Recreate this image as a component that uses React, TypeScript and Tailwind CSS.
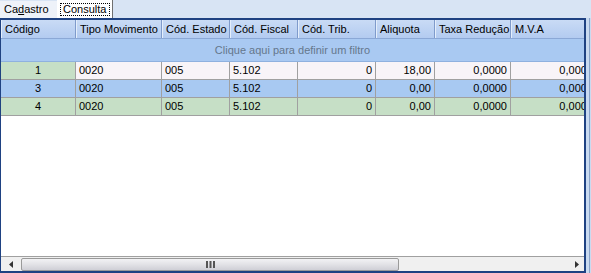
import React from 'react';

const cols = [
  { title: 'Código', w: 'w-[75px]', align: 'text-center' },
  { title: 'Tipo Movimento', w: 'w-[86px]', align: 'text-left' },
  { title: 'Cód. Estado', w: 'w-[68px]', align: 'text-left' },
  { title: 'Cód. Fiscal', w: 'w-[68px]', align: 'text-left' },
  { title: 'Cód. Trib.', w: 'w-[78px]', align: 'text-right' },
  { title: 'Aliquota', w: 'w-[59px]', align: 'text-right' },
  { title: 'Taxa Redução', w: 'w-[76px]', align: 'text-right' },
  { title: 'M.V.A', w: 'w-[86px]', align: 'text-right' },
];

const rows = [
  { bg: 'bg-[#f8f4f8]', first: 'bg-[#c6dfc6]', cells: ['1', '0020', '005', '5.102', '0', '18,00', '0,0000', '0,0000'] },
  { bg: 'bg-[#a8c9f2]', first: 'bg-[#a8c9f2]', cells: ['3', '0020', '005', '5.102', '0', '0,00', '0,0000', '0,0000'] },
  { bg: 'bg-[#c6dfc6]', first: 'bg-[#c6dfc6]', cells: ['4', '0020', '005', '5.102', '0', '0,00', '0,0000', '0,0000'] },
];

export default function App() {
  return (
    <div className="w-[591px] h-[273px] overflow-hidden bg-[#d8e4f4] flex flex-col font-['Liberation_Sans',Tahoma,sans-serif] text-[11px] text-black leading-none">
      {/* tabs */}
      <div className="h-[18px] flex items-end shrink-0">
        <div className="h-[17px] w-[57px] bg-[#eef2f9] flex items-center pl-[4px]">
          <span>Ca<span className="underline">d</span>astro</span>
        </div>
        <div className="h-[18px] w-[56px] bg-white border-l border-white border-r border-r-[#6f6f6f] flex items-center px-[2px]">
          <div className="h-[13px] w-full border border-dotted border-black flex items-center pl-[2px]">Consulta</div>
        </div>
      </div>

      <div className="flex flex-1 min-h-0">
        {/* grid */}
        <div className="w-[586px] h-full bg-white border-l border-t-2 border-r-2 border-b-2 border-[#1f4282] flex flex-col overflow-hidden">
          <div className="flex h-[19px] shrink-0 bg-gradient-to-b from-[#c9dbf5] to-[#b3cbf0] border-b border-[#8ba8d6] text-black">
            {cols.map((c, i) => (
              <div
                key={i}
                className={`${c.w} shrink-0 h-full flex items-center pl-[4px] border-r border-[#7f9bcb] shadow-[inset_1px_0_0_#e4eefb]`}
              >
                {c.title}
              </div>
            ))}
          </div>

          <div className="h-[23px] shrink-0 bg-[#a9c9f2] border-b border-[#8fb1df] flex items-center justify-center text-[#65778c]">
            Clique aqui para definir um filtro
          </div>

          {rows.map((r, ri) => (
            <div key={ri} className={`flex h-[18px] shrink-0 border-b border-[#a0a0a0] ${r.bg}`}>
              {r.cells.map((v, ci) => (
                <div
                  key={ci}
                  className={`${cols[ci].w} shrink-0 h-full flex items-center px-[3px] border-r border-[#a0a0a0] ${ci === 0 ? r.first : ''} ${
                    cols[ci].align === 'text-center' ? 'justify-center' : cols[ci].align === 'text-right' ? 'justify-end' : 'justify-start'
                  }`}
                >
                  {v}
                </div>
              ))}
            </div>
          ))}

          <div className="flex-1 bg-white" />

          {/* horizontal scrollbar */}
          <div className="h-[15px] shrink-0 bg-[#f0f0f0] border-t border-[#a0a0a0] flex items-center">
            <div className="w-[20px] h-full flex items-center justify-center">
              <svg width="4" height="7" viewBox="0 0 4 7">
                <path d="M4 0 L0 3.5 L4 7 Z" fill="#333" />
              </svg>
            </div>
            <div className="w-[378px] h-[13px] rounded-[2px] border border-[#9a9a9a] bg-gradient-to-b from-[#f2f2f4] via-[#e2e2e6] to-[#cfcfd6] flex items-center justify-center">
              <svg width="9" height="7" viewBox="0 0 9 7">
                <rect x="0" y="0" width="2" height="7" fill="#555" />
                <rect x="3.5" y="0" width="2" height="7" fill="#555" />
                <rect x="7" y="0" width="2" height="7" fill="#555" />
              </svg>
            </div>
            <div className="flex-1" />
            <div className="w-[14px] h-full flex items-center justify-center">
              <svg width="4" height="7" viewBox="0 0 4 7">
                <path d="M0 0 L4 3.5 L0 7 Z" fill="#333" />
              </svg>
            </div>
          </div>
        </div>

        {/* side strip */}
        <div className="flex-1 bg-[#c9daf0] flex">
          <div className="w-[3px]" />
          <div className="w-px bg-[#8aa3c8]" />
        </div>
      </div>
    </div>
  );
}
